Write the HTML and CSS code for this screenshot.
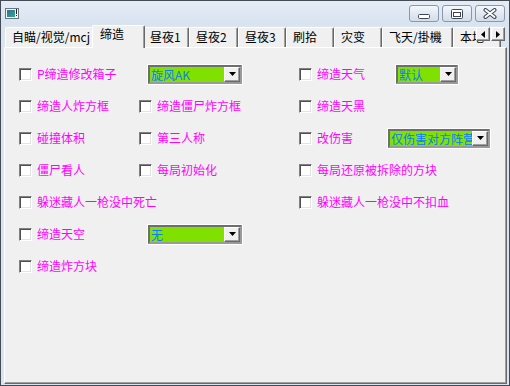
FILE: index.html
```html
<!DOCTYPE html>
<html lang="zh-CN">
<head>
    <meta charset="UTF-8">
    <title>缔造</title>
    <link rel="stylesheet" href="styles.css">
</head>
<body>
    <div class="window">
        <div class="titlebar">
            <svg class="app-icon" width="14" height="11" viewBox="0 0 14 11">
                <defs>
                    <linearGradient id="ico" x1="0" y1="0" x2="1" y2="1">
                        <stop offset="0" stop-color="#2f6f9a"/>
                        <stop offset="1" stop-color="#3aa58a"/>
                    </linearGradient>
                </defs>
                <rect x="0.5" y="0.5" width="13" height="10" fill="#f4f4f4" stroke="#6d7480"/>
                <rect x="2" y="2" width="8" height="7" fill="url(#ico)"/>
                <rect x="11" y="1" width="1" height="5" fill="#222"/>
                <rect x="11" y="7" width="1" height="1" fill="#222"/>
            </svg>
            <div class="caption-buttons">
                <span class="cap-btn">
                    <svg class="glyph-min" width="12" height="5" viewBox="0 0 12 5">
                        <rect x="0.5" y="0.5" width="11" height="4" rx="1" fill="#fff" stroke="#3c4656"/>
                    </svg>
                </span>
                <span class="cap-btn">
                    <svg width="12" height="10" viewBox="0 0 12 10">
                        <rect x="0.5" y="0.5" width="11" height="9" rx="1" fill="#fff" stroke="#3c4656"/>
                        <rect x="2.5" y="3.5" width="7" height="4" fill="none" stroke="#3c4656"/>
                    </svg>
                </span>
                <span class="cap-btn">
                    <svg width="14" height="11" viewBox="0 0 14 11">
                        <path d="M2.5 2 L11.5 9 M11.5 2 L2.5 9" stroke="#3c4656" stroke-width="4" stroke-linecap="round"/>
                        <path d="M2.5 2 L11.5 9 M11.5 2 L2.5 9" stroke="#fff" stroke-width="2" stroke-linecap="round"/>
                    </svg>
                </span>
            </div>
        </div>

        <div class="client">
            <div class="tabstrip">
                <div class="tab tab-aim">自瞄/视觉/mcj</div>
                <div class="tab tab-active">缔造</div>
                <div class="tab tab-narrow">昼夜1</div>
                <div class="tab tab-mid">昼夜2</div>
                <div class="tab">昼夜3</div>
                <div class="tab">刷拾</div>
                <div class="tab">灾变</div>
                <div class="tab tab-fly">飞天/掛機</div>
                <div class="tab">本地</div>
                <div class="tab-scroll">
                    <span class="scroll-btn">
                        <svg width="4" height="7" viewBox="0 0 4 7"><polygon points="4,0 4,7 0,3.5" fill="#000"/></svg>
                    </span>
                    <span class="scroll-btn">
                        <svg width="4" height="7" viewBox="0 0 4 7"><polygon points="0,0 0,7 4,3.5" fill="#000"/></svg>
                    </span>
                </div>
            </div>

            <div class="panel">
                <div class="row">
                    <label class="check"><span class="box"></span>P缔造修改箱子</label>
                    <div class="combo combo-left">
                        <div class="combo-inner">
                            <span class="combo-text">旋风AK</span>
                            <span class="combo-btn"><svg width="7" height="4" viewBox="0 0 7 4"><polygon points="0,0 7,0 3.5,4" fill="#000"/></svg></span>
                        </div>
                    </div>
                    <label class="check"><span class="box"></span>缔造天气</label>
                    <div class="combo combo-small">
                        <div class="combo-inner">
                            <span class="combo-text">默认</span>
                            <span class="combo-btn"><svg width="7" height="4" viewBox="0 0 7 4"><polygon points="0,0 7,0 3.5,4" fill="#000"/></svg></span>
                        </div>
                    </div>
                </div>

                <div class="row">
                    <label class="check"><span class="box"></span>缔造人炸方框</label>
                    <label class="check"><span class="box"></span>缔造僵尸炸方框</label>
                    <label class="check span-right"><span class="box"></span>缔造天黑</label>
                </div>

                <div class="row">
                    <label class="check"><span class="box"></span>碰撞体积</label>
                    <label class="check"><span class="box"></span>第三人称</label>
                    <label class="check"><span class="box"></span>改伤害</label>
                    <div class="combo combo-damage">
                        <div class="combo-inner">
                            <span class="combo-text">仅伤害对方阵营</span>
                            <span class="combo-btn"><svg width="7" height="4" viewBox="0 0 7 4"><polygon points="0,0 7,0 3.5,4" fill="#000"/></svg></span>
                        </div>
                    </div>
                </div>

                <div class="row">
                    <label class="check"><span class="box"></span>僵尸看人</label>
                    <label class="check"><span class="box"></span>每局初始化</label>
                    <label class="check span-right"><span class="box"></span>每局还原被拆除的方块</label>
                </div>

                <div class="row">
                    <label class="check span-left"><span class="box"></span>躲迷藏人一枪没中死亡</label>
                    <label class="check span-right"><span class="box"></span>躲迷藏人一枪没中不扣血</label>
                </div>

                <div class="row">
                    <label class="check"><span class="box"></span>缔造天空</label>
                    <div class="combo combo-left">
                        <div class="combo-inner">
                            <span class="combo-text">无</span>
                            <span class="combo-btn"><svg width="7" height="4" viewBox="0 0 7 4"><polygon points="0,0 7,0 3.5,4" fill="#000"/></svg></span>
                        </div>
                    </div>
                </div>

                <div class="row">
                    <label class="check"><span class="box"></span>缔造炸方块</label>
                </div>
            </div>
        </div>
    </div>
</body>
</html>
```

FILE: styles.css
```css
body {
    margin: 0;
    padding: 0;
    font-family: "Noto Sans CJK SC", "Noto Sans", sans-serif;
    font-size: 12px;
}

.window {
    width: 510px;
    height: 386px;
    box-sizing: border-box;
    border: 1px solid #454b54;
    background: #dbe5f1;
    display: flex;
    flex-direction: column;
}

/* title bar */
.titlebar {
    height: 24px;
    flex: none;
    display: flex;
    align-items: center;
    justify-content: space-between;
    padding: 0 4px;
    background: linear-gradient(#e4ecf6, #d8e3f0);
}

.app-icon {
    display: block;
    margin-top: 1px;
}

.caption-buttons {
    display: flex;
    gap: 3px;
    margin-top: 1px;
}

.cap-btn {
    width: 30px;
    height: 17px;
    box-sizing: border-box;
    border: 1px solid #8a98ab;
    border-radius: 3px;
    background: linear-gradient(#f5f8fc, #e2e9f2 50%, #d3dde9);
    display: flex;
    align-items: center;
    justify-content: center;
}

.cap-btn svg {
    display: block;
}

.glyph-min {
    margin-top: 5px;
}

/* client */
.client {
    flex: 1;
    margin: 0 2px 1px 3px;
    display: flex;
    flex-direction: column;
}

.tabstrip {
    position: relative;
    height: 23px;
    flex: none;
    display: flex;
    align-items: flex-end;
    padding-left: 1px;
    overflow: hidden;
}

.tab {
    flex: none;
    width: 48px;
    height: 20px;
    margin-bottom: 1px;
    box-sizing: border-box;
    padding-left: 6px;
    line-height: 18px;
    background: #f0f0f0;
    border-top: 1px solid #fff;
    border-left: 1px solid #fff;
    border-right: 1px solid #696969;
    box-shadow: inset -1px 0 #a0a0a0;
    border-radius: 2px 2px 0 0;
    white-space: nowrap;
    overflow: hidden;
    color: #000;
}

.tab-aim {
    width: 89px;
}

.tab-narrow {
    width: 46px;
}

.tab-mid {
    width: 49px;
}

.tab-fly {
    width: 71px;
}

.tab-active {
    position: relative;
    z-index: 1;
    width: 53px;
    height: 23px;
    margin: 0 -2px;
    padding-left: 7px;
    padding-top: 1px;
    line-height: 14px;
}

.tab-scroll {
    position: absolute;
    right: 2px;
    top: 2px;
    z-index: 2;
    display: flex;
    gap: 1px;
}

.scroll-btn {
    width: 14px;
    height: 14px;
    box-sizing: border-box;
    background: #f0f0f0;
    border-top: 1px solid #fff;
    border-left: 1px solid #fff;
    border-right: 1px solid #696969;
    border-bottom: 1px solid #696969;
    box-shadow: inset -1px -1px #a0a0a0;
    display: flex;
    align-items: center;
    justify-content: center;
}

.scroll-btn svg {
    display: block;
}

.panel {
    flex: 1;
    margin-top: -1px;
    background: #f0f0f0;
    border-top: 1px solid #fff;
    border-left: 1px solid #fff;
    border-right: 1px solid #696969;
    border-bottom: 1px solid #696969;
    box-shadow: inset -1px -1px #a0a0a0;
    padding: 10px 0 0 14px;
}

/* rows of controls */
.row {
    display: grid;
    grid-template-columns: 120px 160px 88px auto;
    height: 32px;
    align-items: center;
}

.check {
    display: flex;
    align-items: center;
    gap: 5px;
    color: #ff00ff;
    line-height: 14px;
    white-space: nowrap;
}

.span-left {
    grid-column: 1 / 3;
}

.span-right {
    grid-column: 3 / 5;
}

.box {
    flex: none;
    width: 13px;
    height: 13px;
    box-sizing: border-box;
    background: #fff;
    border: 1px solid;
    border-color: #808080 #fff #fff #808080;
    box-shadow: inset 1px 1px #505050, inset -1px -1px #e3e3e3;
}

.combo {
    height: 21px;
    box-sizing: border-box;
    border: 1px solid #fff;
}

.combo-left {
    width: 96px;
    margin-left: 8px;
}

.combo-small {
    width: 64px;
    margin-left: 8px;
}

.combo-damage {
    width: 104px;
}

.combo-inner {
    height: 100%;
    box-sizing: border-box;
    border: 2px solid;
    border-color: #6e6e6e #9a9a9a #9a9a9a #6e6e6e;
    background: #80e000;
    display: flex;
}

.combo-text {
    flex: 1;
    min-width: 0;
    overflow: hidden;
    white-space: nowrap;
    padding-left: 1px;
    line-height: 15px;
    color: #0a7cff;
}

.combo-btn {
    flex: none;
    width: 16px;
    box-sizing: border-box;
    background: #f0f0f0;
    border-top: 1px solid #fff;
    border-left: 1px solid #fff;
    border-right: 1px solid #696969;
    border-bottom: 1px solid #696969;
    box-shadow: inset -1px -1px #a0a0a0;
    display: flex;
    align-items: center;
    justify-content: center;
}

.combo-btn svg {
    display: block;
}
```
